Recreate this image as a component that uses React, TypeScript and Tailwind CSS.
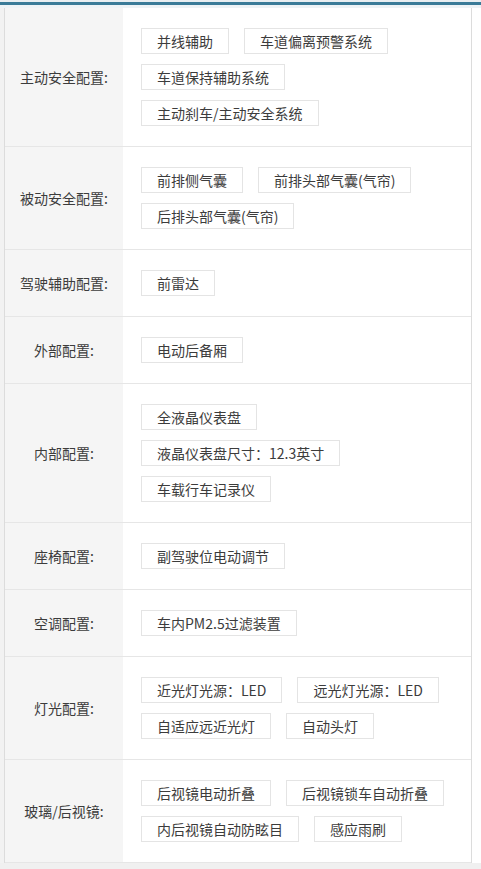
import React from "react";

const ROWS: { label: string; tags: string[] }[] = [
  { label: "主动安全配置:", tags: ["并线辅助", "车道偏离预警系统", "车道保持辅助系统", "主动刹车/主动安全系统"] },
  { label: "被动安全配置:", tags: ["前排侧气囊", "前排头部气囊(气帘)", "后排头部气囊(气帘)"] },
  { label: "驾驶辅助配置:", tags: ["前雷达"] },
  { label: "外部配置:", tags: ["电动后备厢"] },
  { label: "内部配置:", tags: ["全液晶仪表盘", "液晶仪表盘尺寸：12.3英寸", "车载行车记录仪"] },
  { label: "座椅配置:", tags: ["副驾驶位电动调节"] },
  { label: "空调配置:", tags: ["车内PM2.5过滤装置"] },
  { label: "灯光配置:", tags: ["近光灯光源：LED", "远光灯光源：LED", "自适应远近光灯", "自动头灯"] },
  { label: "玻璃/后视镜:", tags: ["后视镜电动折叠", "后视镜锁车自动折叠", "内后视镜自动防眩目", "感应雨刷"] },
];

export default function App() {
  return (
    <div
      className="w-[481px] h-[869px] bg-white text-[#3c3c3c] overflow-hidden"
      style={{ fontFamily: '"Microsoft YaHei", "Noto Sans CJK SC", "Noto Sans", sans-serif' }}
    >
      <div className="h-[2px] bg-[#e9eef1]" />
      <div className="h-[3px] bg-[#3a7b98]" />
      <div className="h-[3px] bg-[#eef3f6]" />
      <div className="flex">
        <div className="w-[4px] bg-[#f2f2f2]" />
        <div className="w-[468px] border-l border-r border-[#dcdcdc]">
          {ROWS.map((row) => (
            <div key={row.label} className="flex border-b border-[#e6e6e6]">
              <div className="w-[118px] shrink-0 bg-[#f5f5f5] flex items-center justify-center text-[14px]">
                {row.label}
              </div>
              <div className="flex-1 pl-[18px] pr-2 py-[20px] flex flex-wrap gap-x-[15px] gap-y-[10px] content-start">
                {row.tags.map((t) => (
                  <span
                    key={t}
                    className="h-[26px] px-[15px] border border-[#e4e4e4] bg-white text-[14px] leading-[24px] whitespace-nowrap"
                  >
                    {t}
                  </span>
                ))}
              </div>
            </div>
          ))}
        </div>
        <div className="flex-1 bg-white" />
      </div>
      <div className="h-[10px] bg-[#f0f0f0]" />
    </div>
  );
}
